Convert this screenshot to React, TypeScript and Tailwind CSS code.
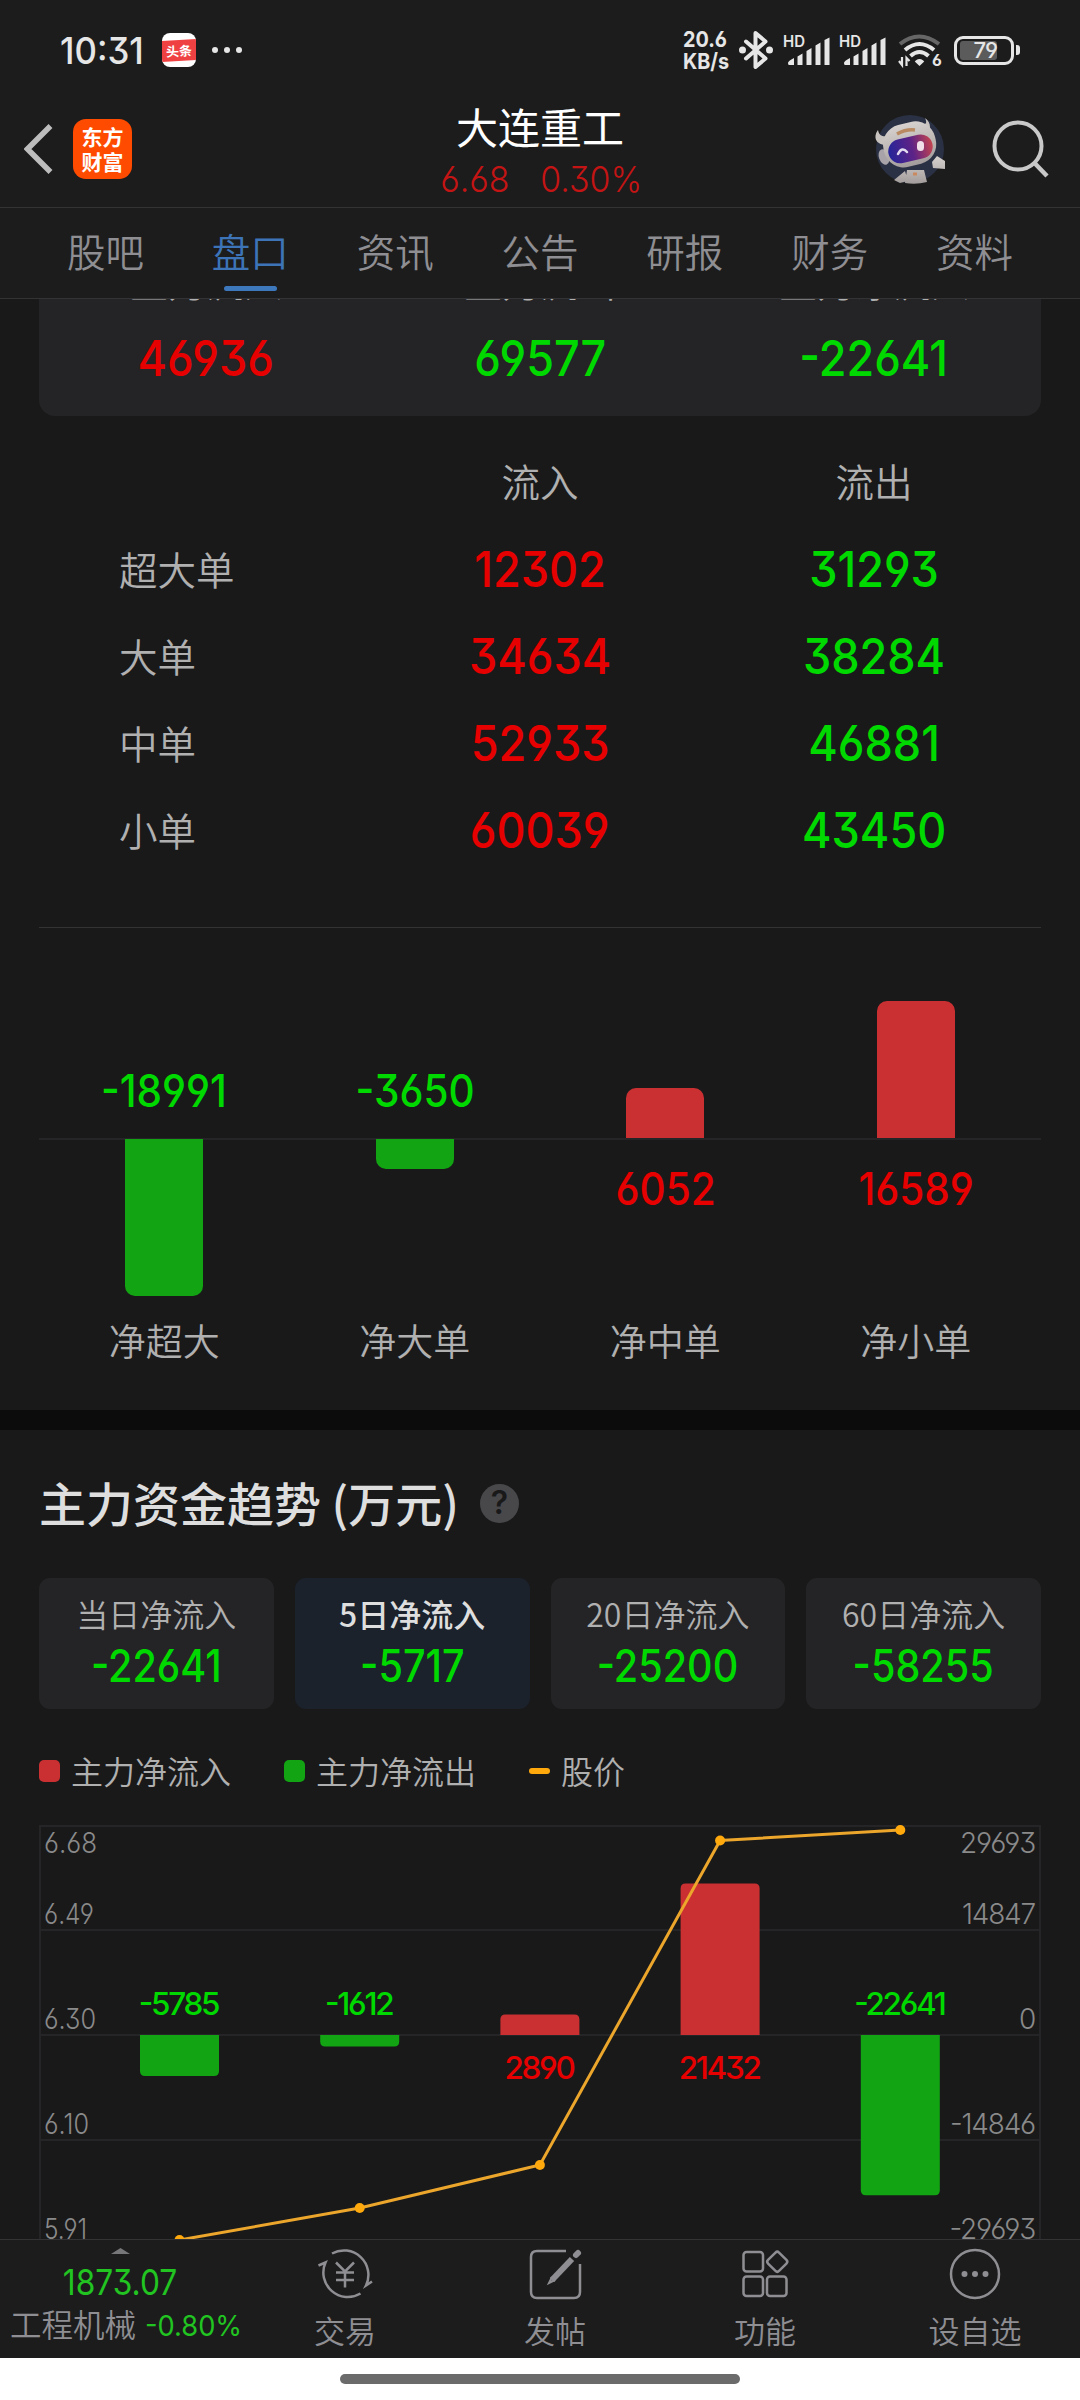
import React from 'react'

const RED = '#e60000'
const GREEN = '#00d900'

interface NumProps {
	children: React.ReactNode
	className?: string
}

// digits: open 6 / 9, flat-top 3 and raised dash, slightly condensed
const Num: React.FC<NumProps> = ({ children, className = '' }) => (
	<span
		className={`inline-block whitespace-nowrap leading-none [font-family:Inter,sans-serif] [font-feature-settings:'cv03','cv04','cv09','case'] ${className}`}
	>
		{children}
	</span>
)

const tabs = ['股吧', '盘口', '资讯', '公告', '研报', '财务', '资料']

const summary = [
	{ label: '主力流入', value: '46936', up: true },
	{ label: '主力流出', value: '69577', up: false },
	{ label: '主力净流入', value: '-22641', up: false },
]

const orders = [
	{ label: '超大单', inflow: '12302', outflow: '31293' },
	{ label: '大单', inflow: '34634', outflow: '38284' },
	{ label: '中单', inflow: '52933', outflow: '46881' },
	{ label: '小单', inflow: '60039', outflow: '43450' },
]

const netOrders = [
	{ label: '净超大', value: -18991 },
	{ label: '净大单', value: -3650 },
	{ label: '净中单', value: 6052 },
	{ label: '净小单', value: 16589 },
]

const periods = [
	{ label: '当日净流入', value: '-22641' },
	{ label: '5日净流入', value: '-5717', active: true },
	{ label: '20日净流入', value: '-25200' },
	{ label: '60日净流入', value: '-58255' },
]

const trend = [
	{ flow: -5785, y: 415 },
	{ flow: -1612, y: 383 },
	{ flow: 2890, y: 340 },
	{ flow: 21432, y: 15.5 },
	{ flow: -22641, y: 5 },
]

const axis = [
	{ price: '6.68', flow: '29693', y: 28, w: 53 },
	{ price: '6.49', flow: '14847', y: 98.5, w: 50 },
	{ price: '6.30', flow: '0', y: 204, w: 52 },
	{ price: '6.10', flow: '-14846', y: 308.5, w: 45 },
	{ price: '5.91', flow: '-29693', y: 413.5, w: 43 },
]

const Signal = () => (
	<svg className="overflow-visible" width="47" height="34" viewBox="0 -4 47 34" fill="#e6e6e6">
		<text x="0" y="10" fontSize="15.500" fontWeight="600" fontFamily="Inter, sans-serif" textLength="22" lengthAdjust="spacingAndGlyphs">
			HD
		</text>
		<path d="M5 26q0-2 6-5v7h-5q-1 0-1-2zM14.500 19.500l5-3V28h-5zM23.500 14l5-3v17h-5zM32.500 8.500l5-3V28h-5zM41.500 3l5-2.500V28h-5z" />
	</svg>
)

const StatusBar = () => (
	<div className="flex h-[100px] items-center pl-[60px] pr-[60px] text-[#e6e6e6]">
		<Num className="w-[84px] origin-left scale-x-[0.94] text-[37px] font-medium">10:31</Num>
		<div className="ml-[18px] flex h-[34px] w-[34px] items-center justify-center overflow-hidden rounded-[8px] bg-white">
			<div className="flex h-[21px] w-[38px] shrink-0 -rotate-3 items-center justify-center bg-[#f04142] text-[13px] font-bold leading-none text-white">
				头条
			</div>
		</div>
		<div className="ml-4 flex gap-[6px]">
			<i className="h-[6px] w-[6px] rounded-full bg-[#e6e6e6]" />
			<i className="h-[6px] w-[6px] rounded-full bg-[#e6e6e6]" />
			<i className="h-[6px] w-[6px] rounded-full bg-[#e6e6e6]" />
		</div>
		<div className="ml-auto flex items-center">
			<div className="flex w-[47px] flex-col">
				<Num className="origin-left scale-x-90 text-[22px] font-bold leading-[18px]">20.6</Num>
				<Num className="origin-left scale-x-90 text-[22px] font-bold leading-[18px]">KB/s</Num>
			</div>
			<svg className="ml-[9px]" width="34" height="38" viewBox="0 0 34 38" fill="none" stroke="#e6e6e6" strokeWidth="4" strokeLinejoin="round" strokeLinecap="round">
				<path d="M7 10.500 26.500 27.500 16.500 36V2l10 8.500L7 27.500" />
				<circle cx="3.500" cy="19" r="1.500" fill="#e6e6e6" />
				<circle cx="30.500" cy="19" r="1.500" fill="#e6e6e6" />
			</svg>
			<div className="ml-[10px] flex gap-[9px]">
				<Signal />
				<Signal />
			</div>
			<svg className="ml-[12px] overflow-visible" width="44" height="34" viewBox="0 0 44 34" fill="none" strokeWidth="4">
				<path d="M2 11q19-15 39 0" stroke="#666" />
				<path d="M7 17q14.500-12 29 0" stroke="#e6e6e6" />
				<path d="M12.500 23q9-8 18 0" stroke="#e6e6e6" />
				<path d="M19 28.500q2.500-2 5 0l-2.500 2.500z" fill="#e6e6e6" stroke="#e6e6e6" strokeWidth="3" />
				<path d="M4 24v8l-3-4M8.500 33v-8l3 3" stroke="#e6e6e6" strokeWidth="2.200" />
				<text x="34" y="33" fontSize="16" fontWeight="700" fill="#e6e6e6" fontFamily="Inter, sans-serif" className="[font-feature-settings:'cv03']">
					6
				</text>
			</svg>
			<div className="ml-[12px] flex items-center gap-[2px]">
				<div className="flex h-[29px] w-[60px] items-center rounded-[9px] border-[3px] border-[#e6e6e6] pl-[3px]">
					<div className="flex h-[19px] w-[37px] items-center justify-end rounded-[3px] bg-[#5b5b5b]">
						<Num className="text-[22px] font-medium tracking-tighter">79</Num>
					</div>
				</div>
				<i className="h-[10px] w-[4px] rounded-r-[3px] bg-[#e6e6e6]" />
			</div>
		</div>
	</div>
)

const Robot = () => (
	<svg width="72" height="70" viewBox="0 0 72 70">
		<defs>
			<linearGradient id="visor" x1="0" y1="0" x2="1" y2="0">
				<stop offset="0" stopColor="#24259a" />
				<stop offset="0.55" stopColor="#5f2386" />
				<stop offset="1" stopColor="#c3434f" />
			</linearGradient>
			<linearGradient id="shell" x1="0" y1="0" x2="0" y2="1">
				<stop offset="0" stopColor="#d6d1ce" />
				<stop offset="1" stopColor="#a39c9c" />
			</linearGradient>
		</defs>
		<circle cx="36" cy="35" r="34" fill="#2b3145" />
		<path d="M10 31C0 29 0 21 4 16c1 6 5 7 10 6zM47 11c6 0 6-3 4-7 7 5 6 13 1 17z" fill="#c9c3c0" />
		<path d="M33 56h17l3 12q-11 3-22 1zM58 48l5-6 8 5v8l-12-1zM20 66l11-9 3 10-8 2z" fill="url(#shell)" />
		<ellipse cx="10" cy="43" rx="5" ry="8" fill="#a8a3a8" transform="rotate(-20 10 43)" />
		<rect x="9" y="9" width="53" height="43" rx="20" fill="url(#shell)" transform="rotate(-14 35 30)" />
		<path d="M23 20q9-5 18-4" stroke="#b98a62" strokeWidth="3.500" fill="none" />
		<rect x="14" y="23" width="45" height="24" rx="12" fill="url(#visor)" transform="rotate(-13 36 35)" />
		<path d="M24 40q4-8 9-2" fill="none" stroke="#e3dcf0" strokeWidth="2.500" strokeLinecap="round" />
		<rect x="43" y="27" width="7" height="10" rx="3.500" fill="#f0dfe8" />
		<path d="M39 60h4" stroke="#c98a5f" strokeWidth="3" />
	</svg>
)

const Header = () => (
	<div className="flex h-[108px] items-center border-b border-[#333335]">
		<div className="flex w-[360px] items-center pb-[10px] pl-[24px]">
			<svg width="29" height="50" viewBox="0 0 29 50" fill="none" stroke="#bdbdbd" strokeWidth="5.500">
				<path d="M26.500 2 3.500 25l23 23" />
			</svg>
			<div className="ml-[20px] flex h-[60px] w-[59px] flex-col items-center justify-center rounded-[13px] bg-[#ff4b00] text-[21px] font-bold leading-[25px] text-white">
				<span>东方</span>
				<span>财富</span>
			</div>
		</div>
		<div className="flex flex-1 flex-col items-center pb-[4px]">
			<div className="text-[42px] leading-[50px] text-white">大连重工</div>
			<div className="flex h-[52px] items-center gap-[25px] pl-[3px] pt-[5px] text-[#c41414]">
				<Num className="scale-x-[0.94] text-[36px] font-[350]">6.68</Num>
				<Num className="scale-x-[0.94] text-[36px] font-[350]">0.30%</Num>
			</div>
		</div>
		<div className="flex w-[360px] items-center justify-end gap-[46px] pb-[10px] pr-[31px]">
			<Robot />
			<svg width="57" height="59" viewBox="0 0 57 59" fill="none" stroke="#c9c9c9" strokeWidth="4">
				<circle cx="26" cy="27" r="23.500" />
				<path d="M42 43.500 55 57" strokeWidth="4.500" />
			</svg>
		</div>
	</div>
)

const TabBar = () => (
	<div className="flex h-[91px] border-b border-[#333335] px-[33px]">
		{tabs.map((tab) => (
			<div key={tab} className={`flex flex-1 flex-col items-center ${tab === '盘口' ? 'text-[#3d74b8]' : 'text-[#8e8e93]'}`}>
				<span className="mt-[17px] h-[50px] text-[38.500px] font-[350] leading-[50px]">{tab}</span>
				{tab === '盘口' && <i className="mt-[11px] h-[5px] w-[53px] rounded-full bg-[#3d78bd]" />}
			</div>
		))}
	</div>
)

const FundFlow = () => (
	<section className="flow-root h-[1111px] px-[39px]">
		<div className="-mt-[60px] grid h-[177px] grid-cols-3 rounded-[16px] bg-[#242426]">
			{summary.map((item) => (
				<div key={item.label} className="flex flex-col items-center">
					<span className="mt-[17px] h-[50px] text-[38px] font-[350] leading-[50px] text-[#b0b0b0]">{item.label}</span>
					<Num className={`mt-[27px] scale-x-[0.9] text-[50px] font-[450] ${item.up ? 'text-[#e60000]' : 'text-[#00d900]'}`}>{item.value}</Num>
				</div>
			))}
		</div>
		<div className="mt-[23px] grid h-[86px] grid-cols-3 items-center pb-[2px] text-center text-[38.500px] font-[350] text-[#b0b0b0]">
			<span />
			<span>流入</span>
			<span>流出</span>
		</div>
		{orders.map((row) => (
			<div key={row.label} className="grid h-[87px] grid-cols-3 items-center text-center">
				<span className="pl-[80px] text-left text-[38.500px] font-[350] text-[#b0b0b0]">{row.label}</span>
				<span>
					<Num className="scale-x-[0.9] text-[50px] font-[450] text-[#e60000]">{row.inflow}</Num>
				</span>
				<span>
					<Num className="scale-x-[0.9] text-[50px] font-[450] text-[#00d900]">{row.outflow}</Num>
				</span>
			</div>
		))}
		<div className="mt-[54px] grid h-[213px] grid-cols-4 items-end border-b-2 border-t border-[#252527] border-t-[#333335]">
			{netOrders.map(({ label, value }) => (
				<div key={label} className="flex flex-col items-center">
					{value < 0 ? (
						<Num className="mb-[25px] scale-x-[0.9] text-[45px] font-[450] text-[#00d900]">{value}</Num>
					) : (
						<div className="w-[78px] rounded-t-[10px] bg-[#ca3032]" style={{ height: (value * 157) / 18991 }} />
					)}
				</div>
			))}
		</div>
		<div className="-mt-px grid h-[176px] grid-cols-4">
			{netOrders.map(({ label, value }) => (
				<div key={label} className="flex flex-col items-center">
					{value < 0 ? (
						<div className="w-[78px] rounded-b-[10px] bg-[#12a412]" style={{ height: (-value * 157) / 18991 }} />
					) : (
						<Num className="mt-[27px] scale-x-[0.9] text-[45px] font-[450] text-[#e60000]">{value}</Num>
					)}
				</div>
			))}
		</div>
		<div className="grid h-[50px] grid-cols-4 text-center text-[37px] font-[350] leading-[50px] text-[#b0b0b0]">
			{netOrders.map(({ label }) => (
				<span key={label}>{label}</span>
			))}
		</div>
	</section>
)

const TrendChart = () => {
	const x = (i: number) => 140.5 + i * 180.2
	const line = trend.map((d, i) => `${x(i)},${d.y}`).join(' ')

	return (
		<svg className="block" width="1002" height="420" viewBox="0 0 1002 420" fontFamily="Inter, sans-serif">
			<g stroke="#252527" strokeWidth="2" fill="none">
				<rect x="1" y="1" width="1000" height="424" />
				<path d="M0 105h1002M0 210h1002M0 315h1002" />
			</g>
			{trend.map((d, i) => {
				const h = (Math.abs(d.flow) * 210) / 29693
				const l = x(i) - 39.5
				return d.flow < 0 ? (
					<path key={i} d={`M${l} 210h79v${h - 5}q0 5-5 5h-69q-5 0-5-5z`} fill="#12a412" />
				) : (
					<path key={i} d={`M${l} 210v${5 - h}q0-5 5-5h69q5 0 5 5v${h - 5}z`} fill="#ca3032" />
				)
			})}
			<g fontSize="28" fontWeight="300" fill="#8a8a8a" className="[font-feature-settings:'cv03','cv04','cv09','case']">
				{axis.map((a) => (
					<React.Fragment key={a.price}>
						<text x="5" y={a.y} textLength={a.w} lengthAdjust="spacingAndGlyphs">
							{a.price}
						</text>
						<text x="996" y={a.y} textAnchor="end" letterSpacing="-1.2">
							{a.flow}
						</text>
					</React.Fragment>
				))}
			</g>
			<g fontSize="31.500" fontWeight="500" textAnchor="middle" letterSpacing="-2.300" className="[font-feature-settings:'cv03','cv04','cv09','case']">
				{trend.map((d, i) => (
					<text key={i} x={x(i) - 1} y={d.flow < 0 ? 190 : 253.5} fill={d.flow < 0 ? GREEN : RED}>
						{d.flow}
					</text>
				))}
			</g>
			<polyline points={line} fill="none" stroke="#eba62b" strokeWidth="3" />
			{trend.map((d, i) => (
				<circle key={i} cx={x(i)} cy={d.y} r="5" fill="#ffa90d" />
			))}
		</svg>
	)
}

const FundTrend = () => (
	<section className="px-[39px]">
		<div className="flex h-[148px] items-center">
			<h2 className="pb-[5px] text-[47px] font-medium leading-none text-[#dedede]">主力资金趋势 (万元)</h2>
			<div className="mb-[2px] ml-[21px] flex h-[39px] w-[39px] items-center justify-center rounded-full bg-[#48484b] text-[#19191a]">
				<Num className="text-[32px] font-semibold [font-feature-settings:normal]">?</Num>
			</div>
		</div>
		<div className="grid h-[131px] grid-cols-4 gap-[21px]">
			{periods.map((p) => (
				<div key={p.label} className={`flex flex-col items-center rounded-[11px] ${p.active ? 'bg-[#1b222c]' : 'bg-[#242426]'}`}>
					<span className={`mt-[15px] h-[40px] text-[32px] leading-[40px] ${p.active ? 'font-medium text-[#dedede]' : 'font-[350] text-[#b0b0b0]'}`}>
						{p.label}
					</span>
					<Num className="mt-[10px] scale-x-[0.88] text-[45px] font-[450] text-[#00d900]">{p.value}</Num>
				</div>
			))}
		</div>
		<div className="flex h-[116px] items-center pt-[8px] text-[32px] font-[350] leading-none text-[#b0b0b0]">
			<div className="flex w-[245px] items-center gap-[11px]">
				<i className="h-[22px] w-[21px] rounded-[5px] bg-[#ca3032]" />
				<span className="pb-[3px]">主力净流入</span>
			</div>
			<div className="flex w-[245px] items-center gap-[11px]">
				<i className="h-[22px] w-[21px] rounded-[5px] bg-[#12a412]" />
				<span className="pb-[3px]">主力净流出</span>
			</div>
			<div className="flex items-center gap-[11px]">
				<i className="h-[6px] w-[21px] rounded-full bg-[#ffa90d]" />
				<span className="pb-[3px]">股价</span>
			</div>
		</div>
		<TrendChart />
	</section>
)

const navItems = [
	{
		label: '交易',
		icon: (
			<>
				<path d="M16 7.500A24.500 24.500 0 0 1 50 39.500l6-4" />
				<path d="M44.500 47.500A24.500 24.500 0 0 1 9.500 16.500l-7 3" />
				<path d="M20 16.500l9 9 9-9M20 26.500h18M20 34h18M29 25.500v16" />
			</>
		),
	},
	{
		label: '发帖',
		icon: (
			<>
				<path d="M40 5H11q-6 0-6 6v35q0 6 6 6h37q6 0 6-6V18" />
				<path d="M46 13 26 34" strokeWidth="6" />
				<path d="m26 31-3 6 6-3" strokeWidth="2" />
				<path d="m50 9 2-2" strokeWidth="6" strokeLinecap="round" />
			</>
		),
	},
	{
		label: '功能',
		icon: (
			<>
				<rect x="7.500" y="6" width="19.500" height="19.500" rx="3" />
				<rect x="7.500" y="30.500" width="19.500" height="19.500" rx="3" />
				<rect x="31" y="30.500" width="19.500" height="19.500" rx="3" />
				<rect x="33.500" y="8" width="15.500" height="15.500" rx="2.500" transform="rotate(45 41.250 15.750)" />
			</>
		),
	},
	{
		label: '设自选',
		icon: (
			<>
				<circle cx="29" cy="28" r="24" />
				<g fill="#8e8e93" stroke="none">
					<circle cx="18.500" cy="28" r="3" />
					<circle cx="29" cy="28" r="3" />
					<circle cx="39.500" cy="28" r="3" />
				</g>
			</>
		),
	},
]

const BottomBar = () => (
	<nav className="flex h-[119px] shrink-0 border-t border-[#333335] bg-[#1c1c1c] text-[#8e8e93]">
		<div className="flex w-[240px] shrink-0 flex-col items-center">
			<svg className="mt-[8px] shrink-0" width="19" height="6" viewBox="0 0 19 6" fill="#77777a">
				<path d="M9.500 0 19 6H0z" />
			</svg>
			<Num className="mt-[10px] scale-x-[0.88] text-[36px] text-[#21c421]">1873.07</Num>
			<div className="mt-[3px] flex w-full items-center whitespace-nowrap pl-[10px] text-[31.500px] font-[350] leading-[40px]">
				工程机械
				<Num className="ml-[9px] w-[98px] origin-left scale-x-[0.94] pt-[4px] text-[29px] font-normal text-[#21c421]">-0.80%</Num>
			</div>
		</div>
		{navItems.map((item) => (
			<div key={item.label} className="flex w-[210px] shrink-0 flex-col items-center">
				<svg className="mt-[6px] shrink-0" width="58" height="58" viewBox="0 0 58 58" fill="none" stroke="#8e8e93" strokeWidth="2.500">
					{item.icon}
				</svg>
				<span className="mt-[6px] text-[31px] font-[350] leading-[40px]">{item.label}</span>
			</div>
		))}
	</nav>
)

const App: React.FC = () => {
	return (
		<div className="flex h-[2400px] w-[1080px] flex-col overflow-hidden bg-[#19191a] [font-family:'Noto_Sans_CJK_SC',sans-serif]">
			<header className="h-[299px] shrink-0 bg-[#1c1c1c]">
				<StatusBar />
				<Header />
				<TabBar />
			</header>
			<main className="h-[1940px] shrink-0 overflow-hidden">
				<FundFlow />
				<div className="h-[20px] bg-[#0c0c0c]" />
				<FundTrend />
			</main>
			<BottomBar />
			<div className="flex h-[42px] shrink-0 justify-center bg-white pt-[16px]">
				<i className="h-[10px] w-[400px] rounded-full bg-[#6b6b6b]" />
			</div>
		</div>
	)
}

export default App
